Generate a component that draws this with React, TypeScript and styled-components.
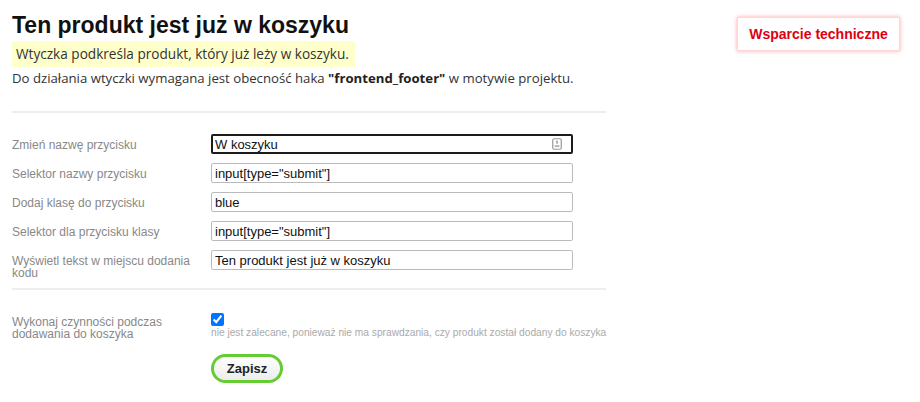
import styled, { createGlobalStyle } from 'styled-components';

const GlobalStyle = createGlobalStyle`
  html, body {
    margin: 0;
    padding: 0;
    background: #fff;
  }
`;

type InputProps = {
  focused?: boolean;
};

const fields = [
  { label: 'Zmień nazwę przycisku', value: 'W koszyku', focused: true },
  { label: 'Selektor nazwy przycisku', value: 'input[type="submit"]' },
  { label: 'Dodaj klasę do przycisku', value: 'blue' },
  { label: 'Selektor dla przycisku klasy', value: 'input[type="submit"]' },
  { label: 'Wyświetl tekst w miejscu dodania kodu', value: 'Ten produkt jest już w koszyku' },
];

const App = () => {
  return (
    <>
      <GlobalStyle />
      <Page>
        <Main>
          <Title>Ten produkt jest już w koszyku</Title>
          <Highlight>Wtyczka podkreśla produkt, który już leży w koszyku.</Highlight>
          <Description>
            Do działania wtyczki wymagana jest obecność haka <strong>"frontend_footer"</strong> w motywie
            projektu.
          </Description>

          <Separator />

          <Fields>
            {fields.map((field) => (
              <Row key={field.label}>
                <Label>{field.label}</Label>
                <InputWrapper>
                  <TextInput focused={field.focused} defaultValue={field.value} readOnly />
                  {field.focused && (
                    <FieldIcon viewBox='0 0 10 12'>
                      <rect x='0.75' y='0.75' width='8.5' height='10.5' rx='1.5' fill='none' stroke='#999' strokeWidth='1.2' />
                      <rect x='4.2' y='2.6' width='1.6' height='3' fill='#999' />
                      <rect x='2.6' y='7' width='4.8' height='2.2' fill='#bbb' />
                    </FieldIcon>
                  )}
                </InputWrapper>
              </Row>
            ))}
          </Fields>

          <Separator second />

          <CheckRow>
            <Label>Wykonaj czynności podczas dodawania do koszyka</Label>
            <div>
              <Checkbox type='checkbox' defaultChecked />
              <Note>nie jest zalecane, ponieważ nie ma sprawdzania, czy produkt został dodany do koszyka</Note>
              <SaveButton type='button'>Zapisz</SaveButton>
            </div>
          </CheckRow>
        </Main>

        <Support>Wsparcie techniczne</Support>
      </Page>
    </>
  );
};

const Page = styled.div`
  display: flex;
  justify-content: space-between;
  align-items: flex-start;
  padding: 11px 20px 0 12px;
  font-family: 'Liberation Sans', Arial, sans-serif;
`;

const Main = styled.div`
  width: 594px;
  display: flex;
  flex-direction: column;
  align-items: flex-start;
`;

const Title = styled.h1`
  margin: 0;
  font-size: 23px;
  line-height: 29px;
  font-weight: 700;
  color: #111;
`;

const Highlight = styled.div`
  margin-top: 1px;
  padding: 4px 6px 4px 4px;
  background-color: #ffffcc;
  font-family: 'Open Sans', sans-serif;
  font-size: 13.6px;
  line-height: 18px;
  color: #333;
`;

const Description = styled.p`
  margin: 2px 0 0;
  font-family: 'Open Sans', sans-serif;
  font-size: 13.2px;
  line-height: 18px;
  color: #333;

  strong {
    color: #222;
  }
`;

const Separator = styled.div<{ second?: boolean }>`
  align-self: stretch;
  height: 2px;
  background-color: #eeeeee;
  margin-top: ${({ second }) => (second ? '9px' : '24px')};
`;

const Fields = styled.div`
  display: flex;
  flex-direction: column;
  gap: 9px;
  margin-top: 21px;
`;

const Row = styled.div`
  display: grid;
  grid-template-columns: 199px 362px;
  align-items: start;
`;

const Label = styled.div`
  padding-top: 5px;
  padding-right: 8px;
  font-size: 12px;
  line-height: 12px;
  color: #888;
`;

const InputWrapper = styled.div`
  position: relative;
`;

const TextInput = styled.input<InputProps>`
  box-sizing: border-box;
  display: block;
  width: 362px;
  height: 20px;
  margin: 0;
  padding: 0 3px;
  border: ${({ focused }) => (focused ? '2px solid #1c1c1c' : '1px solid #bbb')};
  padding-left: ${({ focused }) => (focused ? '2px' : '3px')};
  border-radius: 2px;
  font-family: 'Liberation Sans', Arial, sans-serif;
  font-size: 13px;
  color: #111;
  background: #fff;
  outline: none;
`;

const FieldIcon = styled.svg`
  position: absolute;
  right: 11px;
  top: 4px;
  width: 10px;
  height: 12px;
`;

const CheckRow = styled.div`
  display: grid;
  grid-template-columns: 199px auto;
  align-items: start;
  margin-top: 23px;

  ${Label} {
    padding-top: 3px;
  }
`;

const Checkbox = styled.input`
  display: block;
  width: 13px;
  height: 13px;
  margin: 0;
  accent-color: #0075ff;
`;

const Note = styled.div`
  margin-top: 1px;
  font-size: 10.2px;
  line-height: 12px;
  color: #aaa;
  white-space: nowrap;
`;

const SaveButton = styled.button`
  display: block;
  margin-top: 15px;
  width: 72px;
  height: 29px;
  border: 3px solid #66cc33;
  border-radius: 15px;
  background: linear-gradient(#ffffff, #ececec);
  font-family: 'Liberation Sans', Arial, sans-serif;
  font-size: 13px;
  font-weight: 700;
  color: #222;
  cursor: pointer;
`;

const Support = styled.div`
  margin-top: 6px;
  width: 163px;
  height: 34px;
  box-sizing: border-box;
  display: flex;
  align-items: center;
  justify-content: center;
  background: #fff;
  border: 1px solid #ffd6d6;
  box-shadow: 0 0 4px rgba(255, 0, 0, 0.35);
  font-size: 14px;
  font-weight: 700;
  color: #dd0011;
`;

export default App;
